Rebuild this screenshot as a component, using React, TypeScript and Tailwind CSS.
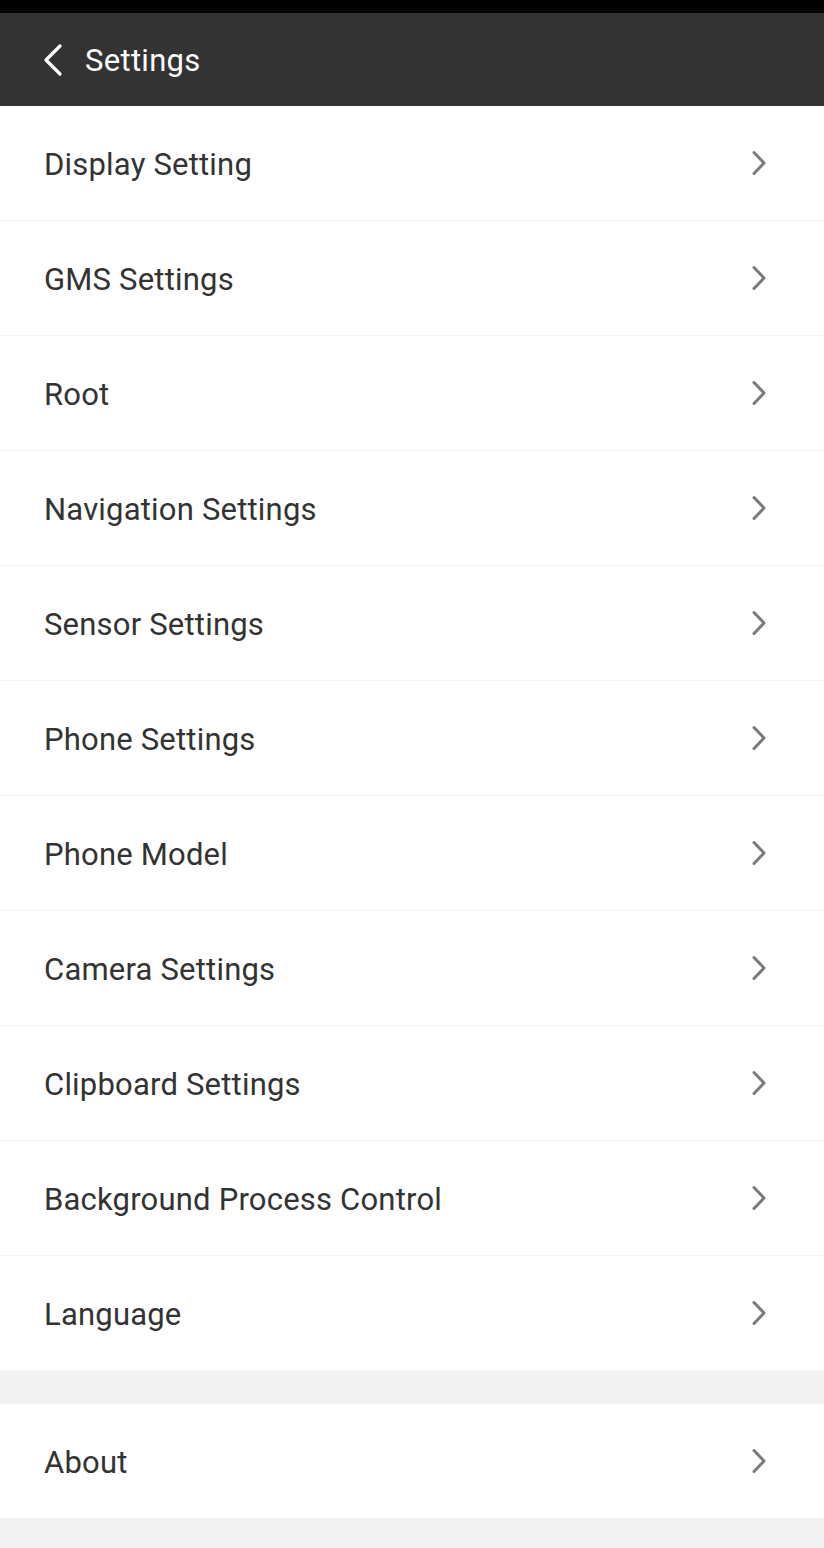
import React from "react";

const items = [
  "Display Setting",
  "GMS Settings",
  "Root",
  "Navigation Settings",
  "Sensor Settings",
  "Phone Settings",
  "Phone Model",
  "Camera Settings",
  "Clipboard Settings",
  "Background Process Control",
  "Language",
];

function Chevron() {
  return (
    <svg width="16" height="26" viewBox="0 0 16 26" className="shrink-0">
      <path d="M3 2.5 L13 13 L3 23.5" fill="none" stroke="#7a7a7a" strokeWidth="3" strokeLinecap="round" strokeLinejoin="round" />
    </svg>
  );
}

function Row({ label, last, h }: { label: string; last?: boolean; h?: string }) {
  return (
    <div className={`flex ${h ?? "h-[115px]"} items-center justify-between bg-white pl-[44px] pr-[57px] ${last ? "" : "border-b border-[#f3f3f3]"}`}>
      <span className="pt-[4px] text-[31px] tracking-[0.2px] text-[#333333]">{label}</span>
      <Chevron />
    </div>
  );
}

export default function App() {
  return (
    <div className="flex min-h-[1548px] w-[824px] flex-col bg-[#f2f2f2]" style={{ fontFamily: "Roboto, 'Noto Sans', sans-serif" }}>
      <div className="h-[13px] bg-black" />
      <div className="flex h-[93px] items-center bg-[#333333] pl-[42px]">
        <svg width="22" height="34" viewBox="0 0 22 34">
          <path d="M18 3 L4 17 L18 31" fill="none" stroke="#ffffff" strokeWidth="3.2" strokeLinecap="round" strokeLinejoin="round" />
        </svg>
        <span className="ml-[21px] pt-[4px] text-[31px] tracking-[0.3px] text-white">Settings</span>
      </div>
      <div className="flex flex-col">
        {items.map((it, i) => (
          <Row key={it} label={it} last={i === items.length - 1} h={i === items.length - 1 ? "h-[114px]" : undefined} />
        ))}
      </div>
      <div className="h-[34px]" />
      <Row label="About" last h="h-[114px]" />
    </div>
  );
}
